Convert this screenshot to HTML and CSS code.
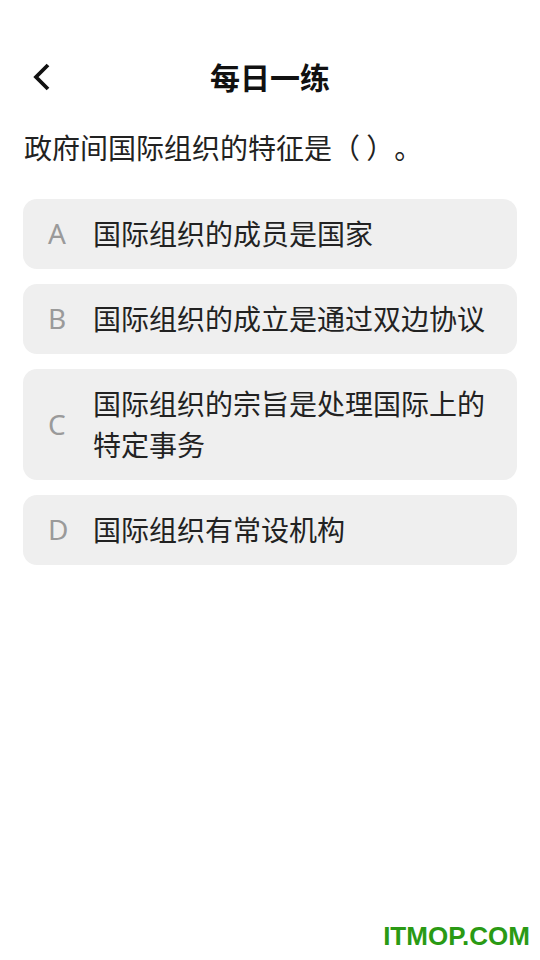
FILE: index.html
```html
<!DOCTYPE html>
<html lang="zh-CN">

<head>
    <meta charset="utf-8">
    <meta name="viewport" content="width=device-width, initial-scale=1.0">
    <title>每日一练</title>

    <link rel="stylesheet" href="styles.css">

</head>

<body>

    <header class="topbar">
        <span class="tilbage">
            <svg width="22" height="30" viewBox="0 0 22 30">
                <path d="M17 3 L5 15 L17 27" fill="none" stroke="#111" stroke-width="3.8" stroke-linejoin="miter"/>
            </svg>
        </span>
        <h1>每日一练</h1>
    </header>

    <p class="spoergsmaal">政府间国际组织的特征是（ ）。</p>

    <section class="svar_liste">
        <div class="svar"><span class="bogstav">A</span><span class="tekst">国际组织的成员是国家</span></div>
        <div class="svar"><span class="bogstav">B</span><span class="tekst">国际组织的成立是通过双边协议</span></div>
        <div class="svar"><span class="bogstav">C</span><span class="tekst">国际组织的宗旨是处理国际上的特定事务</span></div>
        <div class="svar"><span class="bogstav">D</span><span class="tekst">国际组织有常设机构</span></div>
    </section>

    <div class="vandmaerke">ITMOP.COM</div>

</body></html>
```

FILE: styles.css
```css
html {
    background-color: #fff;
}

body {
    margin: 0;
    width: 540px;
    height: 960px;
    position: relative;
    font-family: "Noto Sans CJK SC", "Noto Sans", sans-serif;
    color: #222;
    text-spacing-trim: space-all;
}

.topbar {
    height: 56px;
    margin-top: 48px;
    display: flex;
    align-items: center;
    justify-content: center;
    position: relative;
}

.tilbage {
    position: absolute;
    left: 31px;
    top: 14px;
}

h1 {
    margin: 0;
    font-size: 30px;
    font-weight: 700;
    color: #111;
}

.spoergsmaal {
    margin: 23px 0 0 24px;
    font-size: 28px;
    line-height: 40px;
}

.svar_liste {
    margin: 32px 23px 0 23px;
    display: flex;
    flex-direction: column;
    gap: 15px;
}

.svar {
    background-color: #efefef;
    border-radius: 14px;
    padding: 14px 20px 15px 25px;
    display: flex;
    align-items: center;
    font-size: 28px;
    line-height: 41px;
}

.bogstav {
    width: 45px;
    flex-shrink: 0;
    color: #9a9a9a;
    font-family: "Noto Sans", sans-serif;
    font-weight: 400;
}

.tekst {
    flex: 1;
}

.vandmaerke {
    position: absolute;
    right: 10px;
    bottom: 8px;
    font-family: "Liberation Sans", sans-serif;
    font-weight: 700;
    font-size: 26px;
    color: #2a9a14;
}
```
